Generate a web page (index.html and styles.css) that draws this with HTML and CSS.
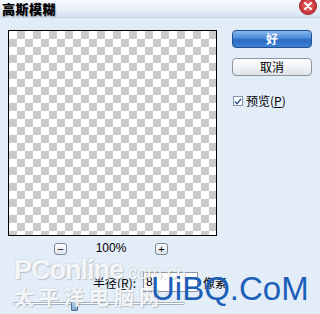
FILE: index.html
```html
<!DOCTYPE html>
<html lang="zh-CN">
<head>
    <meta charset="UTF-8">
    <title>高斯模糊</title>
    <link rel="stylesheet" href="styles.css">
</head>
<body>
    <div class="dialog">
        <div class="titlebar">
            <span class="title">高斯模糊</span>
            <span class="close-btn">
                <svg width="18" height="18" viewBox="0 0 18 18">
                    <circle cx="9" cy="9" r="8.5" fill="#c9353a" stroke="#a4272c"/>
                    <circle cx="9" cy="9" r="6" fill="#d9545a"/>
                    <path d="M6 6 L12 12 M12 6 L6 12" stroke="#fff" stroke-width="2" stroke-linecap="round"/>
                </svg>
            </span>
        </div>

        <div class="main">
            <div class="left-panel">
                <div class="preview"></div>
                <div class="zoom-row">
                    <span class="zoom-btn">&minus;</span>
                    <span class="zoom-value">100%</span>
                    <span class="zoom-btn">+</span>
                </div>
            </div>

            <div class="right-panel">
                <button class="btn btn-ok">好</button>
                <button class="btn btn-cancel">取消</button>
                <label class="check-row">
                    <span class="checkbox">
                        <svg width="9" height="9" viewBox="0 0 9 9">
                            <path d="M1 4.5 L3.5 7 L8 1.5" fill="none" stroke="#2b4f8a" stroke-width="1.6"/>
                        </svg>
                    </span>
                    <span>预览(<u>P</u>)</span>
                </label>
            </div>
        </div>

        <div class="radius-row">
            <span class="radius-label">半径(<u>R</u>):</span>
            <span class="radius-input">8</span>
            <span class="radius-unit">像素</span>
        </div>

        <div class="slider">
            <div class="slider-track"></div>
            <div class="slider-thumb"></div>
        </div>

        <!-- watermarks over the dialog -->
        <div class="wm-pconline">PConline<small>.com.cn</small></div>
        <div class="wm-cn">太平洋电脑网</div>
        <div class="wm-uibq">UiBQ.CoM</div>
    </div>
</body>
</html>
```

FILE: styles.css
```css
* {
    margin: 0;
    padding: 0;
    box-sizing: border-box;
}

body {
    width: 320px;
    height: 314px;
    overflow: hidden;
    background: #e2edf8;
    font-family: "Liberation Sans", "Noto Sans CJK SC", sans-serif;
    font-size: 12px;
    color: #000;
}

.dialog {
    position: relative;
    width: 320px;
    height: 314px;
}

.titlebar {
    height: 18px;
    display: flex;
    justify-content: space-between;
    align-items: flex-start;
    padding-left: 2px;
    padding-right: 3px;
    background: linear-gradient(to bottom, #f6f9fd 0%, #e6eef7 60%, #d3e1f0 100%);
    border-bottom: 1px solid #c7d7e8;
}

.title {
    font-family: "Noto Sans CJK SC", sans-serif;
    font-weight: 900;
    font-size: 13px;
    line-height: 17px;
    letter-spacing: 0.5px;
    text-shadow: 1px 1px 1px rgba(0, 0, 0, 0.25);
}

.close-btn {
    margin-top: -3px;
    height: 18px;
}

.main {
    display: flex;
    padding-top: 12px;
}

.left-panel {
    padding-left: 8px;
    display: flex;
    flex-direction: column;
}

.preview {
    width: 209px;
    height: 206px;
    border: 1px solid #000;
    background-color: #fff;
    background-image: conic-gradient(#cbcbcb 25%, #fff 0 50%, #cbcbcb 0 75%, #fff 0);
    background-size: 16px 16px;
}

.zoom-row {
    display: flex;
    align-items: center;
    height: 13px;
    margin-top: 6px;
    padding-left: 46px;
}

.zoom-btn {
    width: 13px;
    height: 12px;
    border: 1px solid #7a8796;
    border-radius: 3px;
    background: linear-gradient(#fdfdfd, #dfe4ea);
    font-size: 11px;
    line-height: 10px;
    text-align: center;
}

.zoom-value {
    width: 88px;
    text-align: center;
    line-height: 13px;
}

.right-panel {
    margin-left: 15px;
    display: flex;
    flex-direction: column;
    gap: 10px;
}

.btn {
    width: 80px;
    height: 18px;
    border-radius: 4px;
    font-family: "Noto Sans CJK SC", sans-serif;
    font-size: 12px;
    line-height: 14px;
}

.btn-ok {
    color: #fff;
    font-weight: bold;
    border: 1px solid #22518f;
    background: linear-gradient(to bottom, #8ab8ee 0%, #4a8ad8 45%, #2c6cc2 55%, #3b7fd3 100%);
}

.btn-cancel {
    color: #000;
    border: 1px solid #8a96a3;
    background: linear-gradient(to bottom, #ffffff 0%, #f1f3f6 50%, #dde2e8 100%);
}

.check-row {
    display: flex;
    align-items: center;
    gap: 3px;
    margin-top: 8px;
    padding-left: 1px;
    font-family: "Noto Sans CJK SC", sans-serif;
    line-height: 14px;
}

.checkbox {
    width: 10px;
    height: 10px;
    border: 1px solid #8394a8;
    background: #fff;
    display: flex;
    align-items: center;
    justify-content: center;
}

.radius-row {
    display: flex;
    align-items: center;
    margin-top: 17px;
    padding-left: 93px;
    height: 20px;
    font-family: "Noto Sans CJK SC", sans-serif;
}

.radius-label {
    width: 50px;
}

.radius-input {
    width: 55px;
    height: 20px;
    border: 1px solid #8a96a3;
    background: #fff;
    padding-left: 2px;
    line-height: 18px;
    font-family: "Liberation Sans", sans-serif;
}

.radius-unit {
    margin-left: 5px;
}

.slider {
    position: relative;
    margin-top: 10px;
    margin-left: 13px;
    width: 172px;
    height: 12px;
}

.slider-track {
    margin-top: 3px;
    height: 3px;
    border: 1px solid #a4b2c2;
    border-radius: 2px;
    background: #fff;
}

.slider-thumb {
    position: absolute;
    left: 58px;
    top: -2px;
    width: 7px;
    height: 11px;
    border: 1px solid #4d7096;
    border-radius: 3px 3px 1px 1px;
    background: linear-gradient(#c4dcf2, #7ea8d2);
}

.wm-pconline,
.wm-cn {
    position: absolute;
    color: rgba(255, 255, 255, 0.85);
    text-shadow: 1px 1px 1px rgba(110, 120, 130, 0.35), -1px -1px 0 rgba(170, 180, 190, 0.25);
    pointer-events: none;
}

.wm-pconline {
    left: 14px;
    top: 254px;
    font-family: "Liberation Sans", sans-serif;
    font-size: 27px;
    font-weight: bold;
    letter-spacing: -1px;
    line-height: 32px;
}

.wm-pconline small {
    font-size: 18px;
    font-weight: normal;
    letter-spacing: 0;
}

.wm-cn {
    left: 14px;
    top: 285px;
    font-family: "Noto Sans CJK SC", sans-serif;
    font-weight: bold;
    font-size: 20px;
    line-height: 24px;
    letter-spacing: 5px;
}

.wm-uibq {
    position: absolute;
    left: 151px;
    top: 273px;
    font-family: "Liberation Sans", sans-serif;
    font-size: 33px;
    line-height: 32px;
    color: #1c5fb9;
    pointer-events: none;
}
```
